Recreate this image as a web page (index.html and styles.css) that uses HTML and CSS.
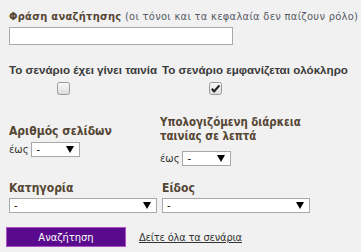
FILE: index.html
```html
<!DOCTYPE html>
<html lang="el">
<head>
<meta charset="utf-8">
<title>Αναζήτηση σεναρίων</title>
<link rel="stylesheet" href="styles.css">
</head>
<body>
<form class="search">
  <div class="phrase">
    <div class="phrase-label"><b>Φράση αναζήτησης</b> (οι τόνοι και τα κεφαλαία δεν παίζουν ρόλο)</div>
    <input class="text-input" type="text">
  </div>

  <div class="grid checks">
    <div class="check-col">
      <div class="check-label">Το σενάριο έχει γίνει ταινία</div>
      <div class="check-box check-box-1">
        <svg width="13" height="13" viewBox="0 0 13 13"><defs><linearGradient id="g1" x1="0" y1="0" x2="0" y2="1"><stop offset="0" stop-color="#fafafa"/><stop offset="1" stop-color="#dcdcdc"/></linearGradient></defs><rect x="0.5" y="0.5" width="12" height="12" rx="2" fill="url(#g1)" stroke="#9a9a9a"/></svg>
      </div>
    </div>
    <div class="check-col">
      <div class="check-label">Το σενάριο εμφανίζεται ολόκληρο</div>
      <div class="check-box check-box-2">
        <svg width="13" height="13" viewBox="0 0 13 13"><defs><linearGradient id="g2" x1="0" y1="0" x2="0" y2="1"><stop offset="0" stop-color="#fafafa"/><stop offset="1" stop-color="#dcdcdc"/></linearGradient></defs><rect x="0.5" y="0.5" width="12" height="12" rx="2" fill="url(#g2)" stroke="#9a9a9a"/><path d="M2.8 6.8 L5.2 9.4 L10.4 3.4" fill="none" stroke="#222" stroke-width="2.2" stroke-linejoin="round"/></svg>
      </div>
    </div>
  </div>

  <div class="grid ranges">
    <div class="range">
      <div class="field-label">Αριθμός σελίδων</div>
      <div class="upto">έως <span class="select small"><span class="val">-</span><span class="arrow"></span></span></div>
    </div>
    <div class="range range-2">
      <div class="field-label">Υπολογιζόμενη διάρκεια<br>ταινίας σε λεπτά</div>
      <div class="upto">έως <span class="select small"><span class="val">-</span><span class="arrow"></span></span></div>
    </div>
  </div>

  <div class="grid cats">
    <div class="cat">
      <div class="field-label">Κατηγορία</div>
      <span class="select wide"><span class="val">-</span><span class="arrow"></span></span>
    </div>
    <div class="cat">
      <div class="field-label">Είδος</div>
      <span class="select wide"><span class="val">-</span><span class="arrow"></span></span>
    </div>
  </div>

  <div class="actions">
    <button type="button" class="btn">Αναζήτηση</button>
    <a class="all-link" href="#">Δείτε όλα τα σενάρια</a>
  </div>
</form>
</body>
</html>
```
FILE: styles.css
```css
html, body {
  margin: 0;
  padding: 0;
  background: #f1f1f1;
}
body {
  font-family: "DejaVu Sans", Verdana, sans-serif;
  font-stretch: condensed;
  font-size: 11px;
  color: #555a66;
}
.search {
  padding: 10px 0 0 9px;
}
.phrase-label {
  line-height: 14px;
  letter-spacing: 0.3px;
  white-space: nowrap;
}
.phrase-label b {
  color: #554634;
}
.text-input {
  display: block;
  box-sizing: border-box;
  width: 224px;
  height: 18px;
  margin: 3px 0 0 0;
  border: 1px solid #a9a9a9;
  background: #fff;
  padding: 0;
}
.grid {
  display: grid;
  grid-template-columns: 153px 190px;
}
.checks {
  margin-top: 18px;
}
.check-label {
  font-family: "Liberation Sans", Arial, sans-serif;
  font-stretch: normal;
  font-weight: bold;
  font-size: 11.6px;
  color: #3a3a3a;
  white-space: nowrap;
  line-height: 14px;
}
.check-box {
  height: 13px;
  margin-top: 5px;
}
.check-box svg { display: block; }
.check-box-1 { margin-left: 48px; }
.check-box-2 { margin-left: 47px; }
.ranges {
  margin-top: 20px;
  align-items: center;
}
.range-2 { margin-left: -2px; }
.field-label {
  font-weight: bold;
  font-size: 12px;
  color: #554634;
  line-height: 14px;
}
.range-2 .field-label {
  font-size: 11.4px;
}
.upto {
  margin-top: 4px;
  color: #333;
  display: flex;
  align-items: center;
  gap: 3px;
}
.range-2 .upto { margin-top: 8px; }
.select {
  box-sizing: border-box;
  display: flex;
  align-items: center;
  justify-content: space-between;
  height: 15px;
  border: 1px solid #a9a9a9;
  background: #fff;
  padding: 0 5px 0 4px;
  color: #000;
  font-size: 11px;
}
.select.small { width: 49px; }
.select.wide { width: 148px; margin-top: 3px; }
.arrow {
  width: 0;
  height: 0;
  border-left: 4px solid transparent;
  border-right: 4px solid transparent;
  border-top: 7px solid #000;
}
.cats {
  margin-top: 15px;
}
.actions {
  display: flex;
  align-items: center;
  margin: 14px 0 0 -3px;
  gap: 13px;
}
.btn {
  box-sizing: border-box;
  width: 120px;
  height: 20px;
  background: #5a0a8c;
  border: 1px solid #b050c8;
  color: #fff;
  font-family: "DejaVu Sans", Verdana, sans-serif;
  font-stretch: condensed;
  font-size: 11px;
  padding: 0;
}
.all-link {
  color: #333;
  text-decoration: underline;
  font-size: 11px;
  letter-spacing: -0.2px;
}
```
